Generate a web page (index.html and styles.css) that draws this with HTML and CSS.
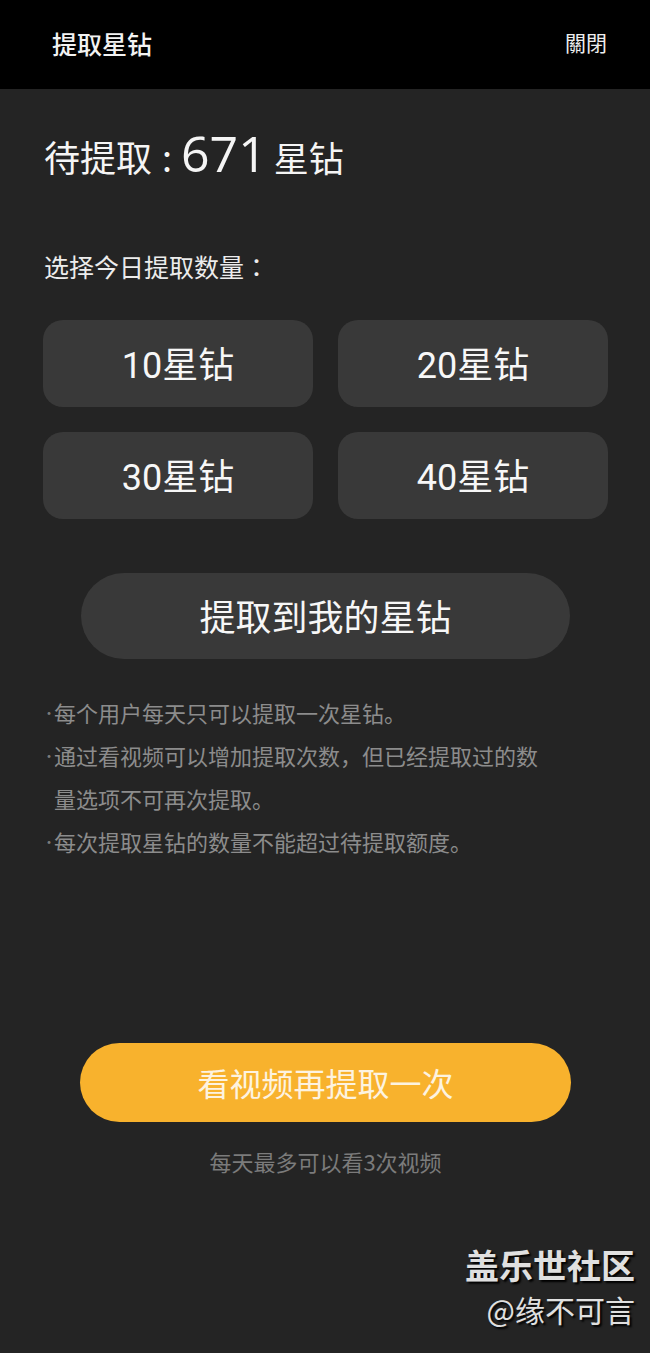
FILE: index.html
```html
<!DOCTYPE html>
<html lang="zh-CN">
<head>
<meta charset="utf-8">
<link rel="stylesheet" href="styles.css">
</head>
<body>
<div class="page">
  <header class="topbar">
    <div class="topbar-title">提取星钻</div>
    <div class="topbar-close">關閉</div>
  </header>
  <main class="content">
    <div class="pending">待提取<span class="colon">:</span><span class="amount">671</span><span class="unit">星钻</span></div>
    <div class="choose-label">选择今日提取数量<span class="fw-colon" lang="zh-TW">：</span></div>
    <div class="options">
      <div class="option">10星钻</div>
      <div class="option">20星钻</div>
      <div class="option">30星钻</div>
      <div class="option">40星钻</div>
    </div>
    <div class="extract-wrap">
      <div class="extract-btn">提取到我的星钻</div>
    </div>
    <ul class="notes">
      <li>每个用户每天只可以提取一次星钻。</li>
      <li>通过看视频可以增加提取次数，但已经提取过的数量选项不可再次提取。</li>
      <li>每次提取星钻的数量不能超过待提取额度。</li>
    </ul>
    <div class="video-wrap">
      <div class="video-btn">看视频再提取一次</div>
      <div class="video-note">每天最多可以看3次视频</div>
    </div>
    <div class="watermark">
      <div class="wm-title">盖乐世社区</div>
      <div class="wm-user">@缘不可言</div>
    </div>
  </main>
</div>
</body>
</html>
```
FILE: styles.css
```css
html, body {
  margin: 0;
  padding: 0;
  background: #242424;
}
body {
  font-family: "Noto Sans CJK SC", "Noto Sans", sans-serif;
  color: #ffffff;
}
.page {
  width: 650px;
  height: 1353px;
  display: flex;
  flex-direction: column;
  overflow: hidden;
}
.topbar {
  height: 89px;
  background: #000000;
  display: flex;
  align-items: center;
  justify-content: space-between;
  padding: 0 43px 0 52px;
  flex-shrink: 0;
}
.topbar-title {
  font-size: 25px;
  font-weight: 500;
  color: #f2f2f2;
  line-height: 1;
  margin-top: -3px;
}
.topbar-close {
  font-size: 21px;
  color: #eeeeee;
  line-height: 1;
  margin-top: -4px;
}
.content {
  flex: 1;
  display: flex;
  flex-direction: column;
  padding: 0 42px 0 43px;
}
.pending {
  margin-top: 34px;
  font-size: 36px;
  line-height: 60px;
  height: 60px;
  display: flex;
  align-items: baseline;
  padding-left: 1px;
  color: #f5f5f5;
}
.colon {
  margin: 0 9px 0 10px;
}
.amount {
  font-family: "Open Sans", "Noto Sans", sans-serif;
  font-size: 50px;
  margin-right: 7px;
}
.unit {
  font-size: 35px;
}
.choose-label {
  margin-top: 66px;
  font-size: 25px;
  line-height: 34px;
  color: #ececec;
  padding-left: 1px;
}
.fw-colon {
  font-family: "Noto Sans CJK TC", "Noto Sans CJK JP", sans-serif;
}
.options {
  margin-top: 37px;
  display: grid;
  grid-template-columns: 270px 270px;
  column-gap: 25px;
  row-gap: 25px;
}
.option {
  height: 87px;
  box-sizing: border-box;
  padding-bottom: 4px;
  border-radius: 20px;
  background: #393939;
  display: flex;
  align-items: center;
  justify-content: center;
  font-family: "Roboto", "Noto Sans CJK SC", sans-serif;
  font-size: 36px;
  color: #f7f7f7;
}
.extract-wrap {
  display: flex;
  justify-content: center;
  margin-top: 54px;
}
.extract-btn {
  width: 489px;
  height: 86px;
  box-sizing: border-box;
  padding-bottom: 2px;
  border-radius: 43px;
  background: #393939;
  display: flex;
  align-items: center;
  justify-content: center;
  font-size: 36px;
  color: #f7f7f7;
}
.notes {
  list-style: none;
  margin: 32px 0 0 0;
  padding: 0 59px 0 11px;
  font-size: 22px;
  line-height: 43px;
  color: #8c8c8c;
}
.notes li {
  position: relative;
}
.notes li::before {
  content: "·";
  position: absolute;
  left: -12px;
  top: 0;
  font-size: 14px;
  color: #7a7a7a;
}
.video-wrap {
  display: flex;
  flex-direction: column;
  align-items: center;
  margin-top: 180px;
}
.video-btn {
  width: 491px;
  height: 79px;
  box-sizing: border-box;
  padding-bottom: 2px;
  border-radius: 40px;
  background: #f8b22d;
  display: flex;
  align-items: center;
  justify-content: center;
  font-size: 32px;
  color: #fdf3e0;
}
.video-note {
  margin-top: 24px;
  font-size: 22px;
  line-height: 30px;
  color: #7b7b7b;
}
.watermark {
  margin-top: 66px;
  align-self: flex-end;
  margin-right: -27px;
  display: flex;
  flex-direction: column;
  align-items: flex-end;
  color: #e0e0e0;
  text-shadow: 2px 2px 2px #000000;
}
.wm-title {
  font-size: 34px;
  font-weight: 700;
  line-height: 46px;
}
.wm-user {
  font-size: 30px;
  line-height: 42px;
}
```
